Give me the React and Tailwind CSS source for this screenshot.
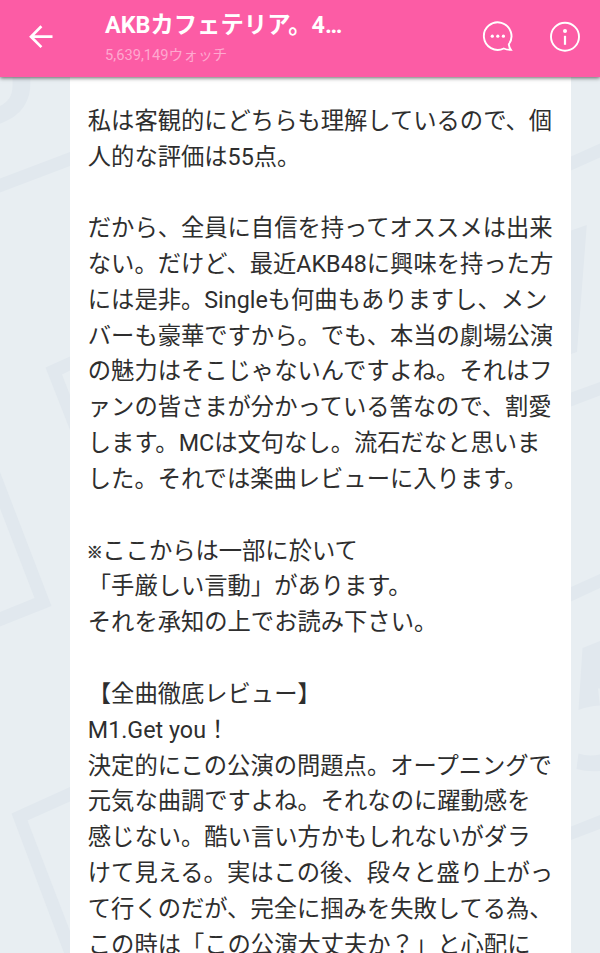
import React from 'react';

const lines = [
  '私は客観的にどちらも理解しているので、個',
  '人的な評価は55点。',
  '',
  'だから、全員に自信を持ってオススメは出来',
  'ない。だけど、最近AKB48に興味を持った方',
  'には是非。Singleも何曲もありますし、メン',
  'バーも豪華ですから。でも、本当の劇場公演',
  'の魅力はそこじゃないんですよね。それはフ',
  'ァンの皆さまが分かっている筈なので、割愛',
  'します。MCは文句なし。流石だなと思いま',
  'した。それでは楽曲レビューに入ります。',
  '',
  '※ここからは一部に於いて',
  '「手厳しい言動」があります。',
  'それを承知の上でお読み下さい。',
  '',
  '【全曲徹底レビュー】',
  'M1.Get you！',
  '決定的にこの公演の問題点。オープニングで',
  '元気な曲調ですよね。それなのに躍動感を',
  '感じない。酷い言い方かもしれないがダラ',
  'けて見える。実はこの後、段々と盛り上がっ',
  'て行くのだが、完全に掴みを失敗してる為、',
  'この時は「この公演大丈夫か？」と心配に',
];

const BackArrow = () => (
  <svg className="w-7 h-7" viewBox="0 0 28 28" fill="none" stroke="#fff" strokeWidth="2.7">
    <path d="M27.500 14.700H6.500M16.400 4.300 6 14.700l10.400 10.400" />
  </svg>
);

const ChatIcon = () => (
  <svg className="w-8 h-8" viewBox="0 0 32 32" fill="none" stroke="#fff" strokeWidth="1.9">
    <path
      d="M26.800 23.300A13.800 13.800 0 1 0 21.800 27.500c2 1 4.300 1.400 7.100 1.300-1.100-1.500-1.800-3.300-2.100-5.500Z"
      strokeLinejoin="miter"
    />
    <g fill="#fff" stroke="none">
      <circle cx="10.300" cy="15.200" r="1.600" />
      <circle cx="15.800" cy="15.200" r="1.600" />
      <circle cx="21.400" cy="15.200" r="1.600" />
    </g>
  </svg>
);

const InfoIcon = () => (
  <svg className="w-8 h-8" viewBox="0 0 32 32" fill="none" stroke="#fff" strokeWidth="1.9">
    <circle cx="16" cy="15.800" r="14" />
    <path d="M16 14.800v9" strokeWidth="2.200" />
    <circle cx="16" cy="10" r="2" fill="#fff" stroke="none" />
  </svg>
);

// Faint card outlines and numerals behind the article
const Backdrop = () => (
  <svg className="absolute inset-0" width="600" height="953" viewBox="0 0 600 953" fill="#e1e8ee">
    <path d="M12.500 70H30.300V84C30.300 105 17 118 0 123.500V106C8 102 12.500 96 12.500 86Z" />
    <path d="M0 178.500 70 152v14L0 192.500Z" />
    <path d="M45.500 367.500 70 356.500v14L62 374.500 70 395v35Z" />
    <path d="M0 472 51.500 606 0 626.500V612L34.500 598 0 508.500Z" />
    <path d="M11.500 813.500 70 787v14.500L27.500 820.500 70 931v22H64Z" />
    <path d="M571 156.500 600 143.500v14L571 170.500Z" />
    <path d="M571 230.500 586.800 225 577 352 571 354Z" />
    <path d="M571 392.500 600 382v13.500L571 406.500Z" />
    <path d="M571 587 600 574v14L571 601.500Z" />
    <path d="M582.500 648 600 641v47.500H598L600 705.500Q588 706 578.500 710Z" />
    <path d="M578.500 753.500Q588 757 600 754.500V771Q587 772 576.500 769Z" />
    <path d="M571 826.500 600 815v14L571 840Z" />
  </svg>
);

const Header = () => (
  <header className="relative z-10 flex h-[77px] bg-[#fc5ca5] text-white shadow-[0_1px_4px_rgba(0,0,0,0.6)]">
    <div className="w-[105px] pl-[25px] pt-[22px]">
      <BackArrow />
    </div>
    <div className="flex-1 pt-[9px]">
      <h1 className="text-[23.350px] leading-8 font-bold whitespace-nowrap">AKBカフェテリア。4…</h1>
      <p className="text-[14.700px] leading-[29px] text-[#fea8cf] whitespace-nowrap">5,639,149ウォッチ</p>
    </div>
    <div className="flex gap-[35px] pt-[21px] pr-[19px]">
      <ChatIcon />
      <InfoIcon />
    </div>
  </header>
);

const Line = ({ text }) => (
  <p className="h-[35.830px] leading-[35.830px] whitespace-nowrap">
    {text.startsWith('※') ? (
      <>
        <span className="relative -top-px -left-px inline-block w-[14.500px] text-[16px] [-webkit-text-stroke:0.5px_#2e2e2e]">※</span>
        {text.slice(1)}
      </>
    ) : (
      text
    )}
  </p>
);

const App = () => {
  return (
    <div
      lang="ja"
      className="relative h-[953px] w-[600px] overflow-hidden bg-[#e8eef2] font-[Roboto,'Noto_Sans_CJK_JP',sans-serif] [text-spacing-trim:space-all]"
    >
      <Backdrop />
      <Header />
      <main className="relative ml-[70px] h-[876px] w-[501px] bg-white pl-[17.800px] pt-[26.700px] text-[23.300px] text-[#2e2e2e]">
        {lines.map((text, i) => (
          <Line key={i} text={text} />
        ))}
      </main>
    </div>
  );
};

export default App;
